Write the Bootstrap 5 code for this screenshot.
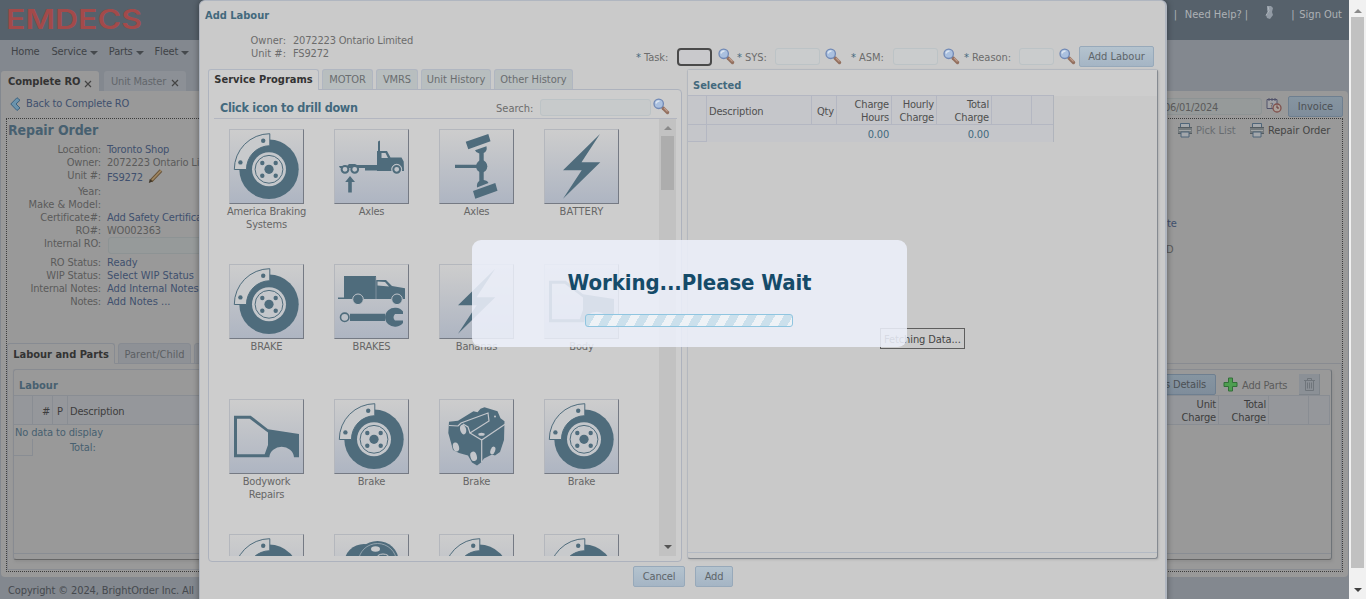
<!DOCTYPE html>
<html lang="en">
<head>
<meta charset="utf-8">
<title>EMDECS - Complete RO</title>
<link href="https://cdn.jsdelivr.net/npm/bootstrap@5.3.0/dist/css/bootstrap.min.css" rel="stylesheet">
<style>
body{width:1366px;height:599px;overflow:hidden;font:11px/13px "DejaVu Sans Condensed","DejaVu Sans",sans-serif;letter-spacing:-.18px;color:#5b5b5b;background:#83888f;white-space:nowrap}
b,.fw-bold{letter-spacing:-.1px}
.page{width:1349px;height:599px}
.topbar{height:40px;background:#56616b;color:#adb1b5;padding-right:7px}
.menu{height:31px;padding:5px 0 0 11px;color:#3f4347;gap:11px}
.caret{width:0;height:0;border:4px solid transparent;border-top-color:#45494d;border-bottom:0;margin:3px 0 0 3px}
.doctab{height:20px;border-radius:3px 3px 0 0;background:#8c9096;color:#62666b;padding:0 7px}
.doctab.on{background:#999;color:#333;height:21px}
.sheet{height:486px;margin:0 1px;background:#999;border-radius:0 4px 4px 4px;padding:5px}
.blue{color:#40506e}.teal{color:#476070}
.fld{border:1px solid #8d9394;border-radius:3px;height:17px;background:#969a9a}
.xbtn{height:21px;border:1px solid #6e7f90;border-radius:2px;background:linear-gradient(#8695a1,#7f8d9b);color:#4c5054}
.dotbox{height:454px;border:1px dotted #3c3c3c;margin-top:1px}
.info .r{height:13px;display:flex}
.info .k{width:93px;text-align:right;margin-right:6px}
.subtab{height:21px;border:1px solid #878b92;border-radius:3px 3px 0 0;background:#8e9196;padding:4px 0 2px;text-align:center;color:#5c5f63}
.subtab.on{background:#999;border-bottom-color:#999;color:#333}
.subpanel{height:207px;border:1px solid #888b91;margin-top:-1px;padding:5px}
.lab{width:1319px;height:191px;border:1px solid #888b91;border-bottom:1px solid #666;border-right-color:#6e7378;border-radius:3px;box-shadow:1px 2px 2px #8888}
.gh{background:#95979b;border:1px solid #898d93;border-width:1px 0;height:30px;color:#3d3d3d}
.gh>div{border-right:1px solid #898d93;display:flex;align-items:center;padding:2px 2px 0}
.dlg{left:199px;top:0;width:968px;height:604px;background:#cacaca;border:1px solid #b0b6c0;border-right-width:2px;border-radius:6px 6px 0 0;box-shadow:0 0 6px #0006;color:#6c6c6c}
.dlg .teal{color:#43697d}
.din{border:1px solid #bcc3c6;border-radius:3px;height:17px;background:#cacccd}
.din.foc{border:2px solid #4a4a4a;border-radius:4px;height:18px;background:#c9c9cc}
.dbtn{height:21px;border:1px solid #97a9ba;border-radius:2px;background:linear-gradient(#b4c3ce,#a5b5c5);color:#5e6569;text-align:center;line-height:19px}
.dtab{height:20px;border:1px solid #b0b6c1;border-bottom:0;border-radius:3px 3px 0 0;background:#b8bebf;text-align:center;line-height:20px;color:#6a6d6f;letter-spacing:-.1px}
.dtab.on{height:21px;background:#cdcdcd;color:#333;position:relative;letter-spacing:0}
.left{width:474px;height:473px;border:1px solid #adb2bd;border-radius:0 4px 4px 4px;background:#cdcdcd;margin-top:-1px;padding:8px 4px 5px 5px}
.icons{width:445px;height:437px;overflow:hidden;padding:10px 0 0 0}
.cellx{width:105px;height:135px;text-align:center;color:#666}
.tile{width:75px;height:75px;border:1px solid #b4b7bd;border-right-color:#757a84;border-bottom-color:#757a84;background:linear-gradient(#cdcdcd,#aeb5c2);margin:0 15px 1px}
.tile svg{display:block;margin:-1px}
.sb{width:17px;background:#c2c2c2}
.right{width:471px;height:490px;border:1px solid #b4b8bf;border-right-color:#858a91;border-bottom-color:#858a91;border-radius:3px;background:#c9c9c9;box-shadow:1px 1px 2px #9997;margin-left:5px}
.sel{border-top:1px solid #b4b7c2;height:30px;color:#4f4f4f;background:#c5c6ca;border-bottom:1px solid #b4b7c2}
.sel>div{border-right:1px solid #b4b7c2;display:flex;align-items:center;padding:2px 2px 0;line-height:13px}
.wait{left:472px;top:240px;width:435px;height:107px;border-radius:9px;background:rgba(237,240,250,.87);padding-top:29px}
.wait h1{font:bold 22px/28px "DejaVu Sans Condensed","DejaVu Sans",sans-serif;color:#154b69;letter-spacing:-.1px;margin:0 0 17px}
.stripes{width:208px;height:13px;margin-right:1px;border:1px solid #8fc5e0;border-radius:3px;background:repeating-linear-gradient(120deg,#cbe0ec 0 8px,#eef2f6 8px 15.6px)}
.fetch{left:880px;top:328px;width:85px;height:21px;border:1px solid #5e5e5e;background:#cacaca;color:#444;padding:4px 3px;letter-spacing:-.1px}
.vs{width:17px;background:#f1f1f1}
</style>
</head>
<body>
<svg width="0" height="0" class="position-absolute">
<defs>
<symbol id="brake" viewBox="0 0 75 75"><circle cx="40" cy="40.3" r="29.7" fill="#4f6c7c"/><circle cx="40" cy="40.3" r="17" fill="#c4c7cb"/><circle cx="40" cy="40.3" r="13.9" fill="none" stroke="#4f6c7c"/><g fill="#4f6c7c"><circle cx="40" cy="40.3" r="4.6"/><circle cx="33.3" cy="34" r="2.2"/><circle cx="46.7" cy="34" r="2.2"/><circle cx="33.3" cy="46.7" r="2.2"/><circle cx="46.7" cy="46.7" r="2.2"/></g><path d="M5.3 40.5A35.7 35.7 0 0 1 40.8 4.7V16.7A23.5 23.5 0 0 0 17.5 40.5Z" fill="#c8cacc" stroke="#4f6c7c"/><circle cx="34.2" cy="11.7" r="2.2" fill="#4f6c7c"/><circle cx="11.4" cy="33.4" r="2.2" fill="#4f6c7c"/></symbol>
<symbol id="truck" viewBox="0 0 75 75"><g fill="#4f6c7c"><path d="M44 12.5l2-1V22h7l3.5 6.500h11l2.2 4L70 42H43V22h1zM47.500 24v5H54L51.500 24z" fill-rule="evenodd"/><path d="M5 37h8l2-2h6l2 1h20v3H6zM31 38h12v3.500H31zM16 47l5 6h-3.200v10.500h-3.600V53H11.200z"/></g><g fill="#c0c4ca" stroke="#4f6c7c" stroke-width="2"><circle cx="11" cy="40.300" r="3.400"/><circle cx="20.700" cy="40.300" r="3.400"/><circle cx="62.700" cy="40.300" r="5" stroke="#bfc3c9" stroke-width="1"/><circle cx="62.700" cy="40.300" r="3.400"/></g></symbol>
<symbol id="axle" viewBox="0 0 75 75"><g fill="#4f6c7c"><path d="M26.700 12.700L49.300 5l2.200 7.300-22.200 8zM34 62l22.300-8 2.200 7.700-22.200 8zM36 21.300l11.500-4q1 5-2.800 6.700V51q4 .5 4.800 3L38 58.500q-.6-5 2.300-6.500V24.500Q37 24 36 21.300zM16 35.700h24V39H16z"/><ellipse cx="42.700" cy="37.300" rx="5.600" ry="6.200"/></g></symbol>
<symbol id="bolt" viewBox="0 0 75 75"><path d="M56 5L19 41.300h18.700L19 69.700l37.300-36.400H37.500z" fill="#4f6c7c"/></symbol>
<symbol id="van" viewBox="0 0 75 75"><path d="M10 12h32v4h10l6 6 13 2.300V35H4v-1.500h6zM43.500 17.500v4L55 22.500l-4-4.500z" fill="#4f6c7c" fill-rule="evenodd"/><path d="M42 13v22" stroke="#9da9b3" stroke-width=".6"/><g fill="#4f6c7c" stroke="#bfc3c9"><circle cx="24" cy="35.300" r="5.300"/><circle cx="63" cy="35.300" r="5.300"/></g><path d="M16 49.700h35V57H16z" fill="#4f6c7c"/><circle cx="10.700" cy="53.300" r="4.200" fill="#bbc0c7" stroke="#4f6c7c" stroke-width="1.600"/><path d="M69 47.500A10 9.500 0 1 0 69 59v-2.500H61q-3-3.200 0-6.500h8z" fill="#4f6c7c"/></symbol>
<symbol id="body" viewBox="0 0 75 75"><path d="M5 16.700h16.700L39 30.300 70 35v23.300h-5a12.400 11.500 0 0 0-24.700 0H5zM8 19.700v35.600h27.700L39 46V33.500L20.700 19.700z" fill="#4f6c7c" fill-rule="evenodd"/></symbol>
<symbol id="engine" viewBox="0 0 75 75"><path d="M10 22.700l9-1 13-8 2.500-1.500 4 1 3-3.500 4-1.500 13 4 3 7 4 3L65 41l-4 12-5 3.500-3-1-8 4-3 4-4 3-5-3-4-7-9-2.500-6-3L9.300 34z" fill="#4f6c7c"/><g fill="none" stroke="#c3c6cb" stroke-width="1.200"><path d="M10 26.500l9 .5 3-3 27-10 1 8L31 34l11.700 7L66 25.300M42.700 41v22M31 34l-2-6-5-3"/></g><g fill="#c3c6cb"><ellipse cx="24" cy="30.500" rx="3" ry="5" transform="rotate(-15 24 30)"/><ellipse cx="17" cy="48" rx="3" ry="4.600" transform="rotate(-15 17 48)"/><ellipse cx="34.500" cy="57.500" rx="3.200" ry="4.800" transform="rotate(-15 34 57)"/><ellipse cx="54" cy="51.500" rx="2.300" ry="4" transform="rotate(20 54 51)"/><ellipse cx="42.500" cy="35.200" rx="3.200" ry="1.500"/><circle cx="56" cy="17.500" r="1"/></g></symbol>
<symbol id="drum" viewBox="0 0 75 75"><ellipse cx="30" cy="30" rx="20" ry="20" fill="#4f6c7c"/><ellipse cx="43.500" cy="27" rx="21" ry="20" fill="#4f6c7c"/><ellipse cx="43.500" cy="28" rx="19" ry="18.500" fill="none" stroke="#a5b1ba" stroke-width=".8"/><ellipse cx="41.500" cy="15" rx="4.500" ry="2.700" fill="#c8cacc"/><ellipse cx="49" cy="25" rx="7" ry="5" fill="none" stroke="#c8cacc"/></symbol>
<symbol id="mag" viewBox="0 0 17 17"><path d="M10 10l4.500 4.500" stroke="#93705f" stroke-width="3.400" stroke-linecap="round"/><path d="M11 10l3.500 3.500" stroke="#c09c8b" stroke-width="1.200"/><circle cx="5.700" cy="5.800" r="4.700" fill="#aac0df" stroke="#7088b5" stroke-width="1.300"/><path d="M3 5.500Q3.500 3 6.500 3" stroke="#dce5f0" stroke-width="1.400" fill="none"/></symbol>
<symbol id="printer" viewBox="0 0 16 16"><path d="M3.500 1.500h9V6h-9z" fill="#a4a8ac" stroke="#4f6579"/><path d="M1 5h14v7H1z" fill="#747a7d"/><path d="M1 5.500h14M1 11.500h14" stroke="#555d62"/><path d="M2 8.500h12" stroke="#a0a4a5"/><path d="M4 10h8v5H4z" fill="#a3a7ab" stroke="#4f6579"/></symbol>
</defs>
</svg>
<div class="d-flex">
<div class="page d-flex flex-column">
  <header class="topbar d-flex justify-content-between align-items-start">
    <svg width="150" height="40"><text x="6" y="28.500" textLength="136" lengthAdjust="spacingAndGlyphs" font-family="Inter,sans-serif" font-weight="600" font-size="26.500" letter-spacing="0" fill="#a34a4a">EMDECS</text></svg>
    <div class="d-flex" style="padding-top:8px"><span>|</span><span style="margin-left:8px;letter-spacing:0">Need Help? |</span>
      <svg width="14" height="15" viewBox="0 0 14 15" style="margin:-3px 15px 0 14px"><path d="M5 1h4l2 2-1 4 1 3-3 4-3-1-1-3 2-2-1-3z" fill="#929ba5"/><path d="M6 1.500l1 4-3 5" stroke="#b0b7be" fill="none"/></svg>
      <span>|</span><span style="margin-left:5px;letter-spacing:0">Sign Out</span></div>
  </header>
  <nav class="menu d-flex"><span style="margin-right:1px">Home</span><span class="d-flex align-items-center" style="height:13px">Service<i class="caret"></i></span><span class="d-flex align-items-center" style="height:13px">Parts<i class="caret"></i></span><span class="d-flex align-items-center" style="height:13px">Fleet<i class="caret"></i></span></nav>
  <div class="d-flex" style="gap:5px;padding-left:1px;height:20px">
    <div class="doctab on d-flex align-items-center justify-content-between fw-bold" style="width:98px"><span style="letter-spacing:0">Complete RO</span><svg width="8" height="8" style="margin-top:4px"><path d="M1 1l6 6M7 1L1 7" stroke="#444" stroke-width="1.200"/></svg></div>
    <div class="doctab d-flex align-items-center justify-content-between" style="width:82px"><span>Unit Master</span><svg width="8" height="8" style="margin-top:4px"><path d="M1 1l6 6M7 1L1 7" stroke="#444" stroke-width="1.200"/></svg></div>
  </div>
  <main class="sheet">
    <div class="d-flex justify-content-between" style="height:21px">
      <div class="d-flex blue" style="padding-left:4px;gap:5px"><svg width="11" height="14" viewBox="0 0 11 14" style="margin-top:1px"><path d="M7 .7l3 2.500L6 7l4 4-3 2.500L.8 7z" fill="#6b93ad" stroke="#3d627f"/></svg><span style="padding-top:1px;letter-spacing:-.13px">Back to Complete RO</span></div>
      <div class="d-flex"><div class="fld text-end" style="width:110px;margin-top:2px;padding:3px 43px 0 0;line-height:12px;letter-spacing:-.3px">06/01/2024</div>
        <svg width="16" height="16" viewBox="0 0 16 16" style="margin:1px 6px 0 4px"><path d="M1 2.500h10v9H1zM3 1v3M6 1v3M9 1v3" fill="#a1a1a5" stroke="#50526b"/><text x="4" y="10.500" font-size="7" fill="#444">?</text><circle cx="11" cy="11" r="4" fill="#aaa09a" stroke="#80514d" stroke-width="1.300"/><path d="M11 8.500V11h2" stroke="#633" fill="none"/></svg>
        <div class="xbtn text-center" style="width:55px;line-height:19px;letter-spacing:0">Invoice</div></div>
    </div>
    <section class="dotbox">
      <div class="d-flex justify-content-between" style="height:224px;padding:0 10px 0 1px">
        <div class="info">
          <div class="fw-bold teal" style="font-size:14px;line-height:16px;padding-top:3px;height:24px">Repair Order</div>
          <div class="r"><span class="k">Location:</span><span class="blue">Toronto Shop</span></div>
          <div class="r"><span class="k">Owner:</span><span>2072223 Ontario Limited</span></div>
          <div class="r" style="height:16px"><span class="k">Unit #:</span><span class="blue" style="padding-top:2px">FS9272</span><svg width="16" height="16" viewBox="0 0 16 16" style="margin:-1px 0 0 5px"><path d="M3 13L13 2.500" stroke="#675339" stroke-width="3.600"/><path d="M4 12L13 2.500" stroke="#a08660" stroke-width="1.800"/><path d="M.8 15l1-4 2.700 2.500z" fill="#403729"/></svg></div>
          <div class="r"><span class="k">Year:</span></div>
          <div class="r"><span class="k" style="letter-spacing:-.05px">Make &amp; Model:</span></div>
          <div class="r"><span class="k">Certificate#:</span><span class="blue">Add Safety Certificate</span></div>
          <div class="r"><span class="k">RO#:</span><span>WO002363</span></div>
          <div class="r" style="height:19px"><span class="k">Internal RO:</span><span class="fld" style="width:150px;margin-left:1px"></span></div>
          <div class="r"><span class="k">RO Status:</span><span class="blue" style="letter-spacing:0">Ready</span></div>
          <div class="r"><span class="k">WIP Status:</span><span class="blue" style="letter-spacing:0">Select WIP Status</span></div>
          <div class="r"><span class="k">Internal Notes:</span><span class="blue" style="letter-spacing:-.03px">Add Internal Notes</span></div>
          <div class="r"><span class="k">Notes:</span><span class="blue" style="letter-spacing:0">Add Notes ...</span></div>
        </div>
        <div style="width:155px">
          <div class="d-flex" style="padding-top:3px;height:98px"><svg width="16" height="16"><use href="#printer"/></svg><span style="width:56px;padding:2px 0 0 3px;color:#686c70;letter-spacing:-.05px">Pick List</span><svg width="16" height="16"><use href="#printer"/></svg><span style="padding:2px 0 0 3px;color:#454545;letter-spacing:-.05px">Repair Order</span></div>
          <div class="blue" style="margin-left:-10px;height:26px">te</div><div style="margin-left:-11px">D</div>
        </div>
      </div>
      <div class="d-flex" style="gap:3px"><div class="subtab on fw-bold" style="width:108px;position:relative;letter-spacing:0">Labour and Parts</div><div class="subtab" style="width:73px;letter-spacing:0">Parent/Child</div><div class="subtab" style="width:73px"></div></div>
      <div class="subpanel"><div class="lab">
        <div class="d-flex justify-content-between" style="height:25px;padding:4px 11px 0 5px"><b class="teal" style="padding-top:5px;letter-spacing:0">Labour</b>
          <div class="d-flex"><div class="xbtn" style="width:90px;text-align:right;padding-right:9px;line-height:19px">Parts Details</div><svg width="15" height="15" viewBox="0 0 15 15" style="margin:3px 4px 0 7px"><path d="M5.500 1h4v4.500H14v4H9.500V14h-4V9.500H1v-4h4.500z" fill="#4e9e50" stroke="#326f38"/></svg><span style="padding-top:5px;width:57px">Add Parts</span><div style="width:21px;height:21px;background:#8b9096;border-right:1px solid #7e848a;border-bottom:1px solid #7e848a"><svg width="20" height="20" viewBox="0 0 20 20" fill="none" stroke="#6f757b"><path d="M5 6.500h11M8.500 6V4.500h4V6M6.500 7v9.500h8V7M8.500 8.500v6M10.500 8.500v6M12.500 8.500v6"/></svg></div></div></div>
        <div class="gh d-flex" style="width:1316px"><div style="width:19px"></div><div class="justify-content-end" style="width:20px">#</div><div class="justify-content-center" style="width:15px">P</div><div style="width:1050px">Description</div><div class="text-end justify-content-end flex-grow-1">Unit<br>Charge</div><div class="text-end justify-content-end" style="width:50px">Total<br>Charge</div><div style="width:40px"></div><div style="width:21px"></div></div>
        <div class="teal" style="height:14px;padding:1px 0 0 1px;letter-spacing:-.13px">No data to display</div>
        <div class="d-flex" style="height:17px"><div style="width:19px;border:1px solid #898d93;border-width:0 1px 1px 0"></div><div class="teal" style="padding:2px 0 0 37px;letter-spacing:-.1px">Total:</div></div>
        <div style="height:98px;border-bottom:1px solid #898d93"></div>
      </div></div>
    </section>
  </main>
  <footer style="padding:7px 0 0 8px;color:#45494e;letter-spacing:-.12px">Copyright © 2024, BrightOrder Inc. All&nbsp; rights reserved</footer>
</div>
<div class="vs d-flex flex-column align-items-center" style="height:599px;padding:9px 0 7px"><svg width="8" height="4"><path d="M0 4l4-4 4 4z" fill="#8a8a8a"/></svg><div style="width:13px;height:551px;background:#c1c1c1;margin:4px 1px 20px 0"></div><svg width="8" height="4"><path d="M0 0l4 4 4-4z" fill="#404040"/></svg></div>
</div>

<div class="dlg position-absolute" role="dialog">
  <b class="teal d-block" style="padding:8px 0 0 5px;height:33px;letter-spacing:0">Add Labour</b>
  <div class="d-flex" style="height:35px">
    <div class="text-end" style="width:86px;letter-spacing:0">Owner:<br>Unit #:</div><div style="width:345px;padding-left:7px">2072223 Ontario Limited<br>FS9272</div>
    <div class="d-flex" style="padding-top:14px;letter-spacing:-.05px">
      <div style="width:46px;padding:3px 0 0 5px"><span class="teal">*</span> Task:</div><div class="din foc" style="width:35px"></div>
      <svg width="17" height="17" style="margin:0 2px 0 6px"><use href="#mag"/></svg><div style="width:38px;padding-top:3px"><span class="teal">*</span> SYS:</div><div class="din" style="width:45px"></div>
      <svg width="17" height="17" style="margin:0 9px 0 5px"><use href="#mag"/></svg><div style="width:42px;padding-top:3px"><span class="teal">*</span> ASM:</div><div class="din" style="width:45px"></div>
      <svg width="17" height="17" style="margin:0 4px 0 5px"><use href="#mag"/></svg><div style="width:55px;padding-top:3px"><span class="teal">*</span> Reason:</div><div class="din" style="width:35px"></div>
      <svg width="17" height="17" style="margin:0 3px 0 5px"><use href="#mag"/></svg><div class="dbtn" style="width:75px;margin-top:-2px;letter-spacing:0">Add Labour</div>
    </div>
  </div>
  <div class="d-flex" style="padding-left:8px">
    <div>
      <div class="d-flex" style="gap:3px;height:21px"><div class="dtab on fw-bold" style="width:111px">Service Programs</div><div class="dtab" style="width:51px">MOTOR</div><div class="dtab" style="width:42px">VMRS</div><div class="dtab" style="width:70px;letter-spacing:0">Unit History</div><div class="dtab" style="width:79px;letter-spacing:0">Other History</div></div>
      <div class="left">
        <div class="d-flex" style="height:21px;border-bottom:1px solid #b3b6c0;padding-left:6px"><b class="teal" style="font-size:12.500px;line-height:19px;width:276px;letter-spacing:-.28px">Click icon to drill down</b><span style="width:44px;padding-top:4px;letter-spacing:0">Search:</span><div class="din" style="width:111px;margin-top:1px;background:#c7cacb"></div><svg width="17" height="17" style="margin-left:2px"><use href="#mag"/></svg></div>
        <div class="d-flex">
          <div class="icons d-flex flex-wrap align-content-start">
            <div class="cellx"><div class="tile"><svg width="75" height="75"><use href="#brake"/></svg></div>America Braking<br>Systems</div>
            <div class="cellx"><div class="tile"><svg width="75" height="75"><use href="#truck"/></svg></div>Axles</div>
            <div class="cellx"><div class="tile"><svg width="75" height="75"><use href="#axle"/></svg></div>Axles</div>
            <div class="cellx"><div class="tile"><svg width="75" height="75"><use href="#bolt"/></svg></div><span style="letter-spacing:.1px">BATTERY</span></div>
            <div class="cellx"><div class="tile"><svg width="75" height="75"><use href="#brake"/></svg></div>BRAKE</div>
            <div class="cellx"><div class="tile"><svg width="75" height="75"><use href="#van"/></svg></div>BRAKES</div>
            <div class="cellx"><div class="tile"><svg width="75" height="75"><use href="#bolt"/></svg></div>Bananas</div>
            <div class="cellx"><div class="tile"><svg width="75" height="75"><use href="#body"/></svg></div>Body</div>
            <div class="cellx"><div class="tile"><svg width="75" height="75"><use href="#body"/></svg></div>Bodywork<br>Repairs</div>
            <div class="cellx"><div class="tile"><svg width="75" height="75"><use href="#brake"/></svg></div>Brake</div>
            <div class="cellx"><div class="tile"><svg width="75" height="75"><use href="#engine"/></svg></div>Brake</div>
            <div class="cellx"><div class="tile"><svg width="75" height="75"><use href="#brake"/></svg></div>Brake</div>
            <div class="cellx"><div class="tile"><svg width="75" height="75"><use href="#brake"/></svg></div></div>
            <div class="cellx"><div class="tile"><svg width="75" height="75"><use href="#drum"/></svg></div></div>
            <div class="cellx"><div class="tile"><svg width="75" height="75"><use href="#brake"/></svg></div></div>
            <div class="cellx"><div class="tile"><svg width="75" height="75"><use href="#brake"/></svg></div></div>
          </div>
          <div class="sb d-flex flex-column align-items-center" style="padding-top:7px"><svg width="8" height="4"><path d="M0 4l4-4 4 4z" fill="#8a8a8a"/></svg><div style="width:13px;height:54px;background:#adadad;margin:6px 0 355px"></div><svg width="8" height="4"><path d="M0 0l4 4 4-4z" fill="#555"/></svg></div>
        </div>
      </div>
    </div>
    <div class="right">
      <div style="height:26px;background:#cdcdcd;padding:9px 0 0 5px"><b class="teal" style="letter-spacing:0">Selected</b></div>
      <div style="width:366px;border-right:1px solid #b0b4bc">
        <div class="sel d-flex" style="margin-top:-1px"><div style="width:19px"></div><div style="width:105px;padding-top:3px">Description</div><div class="justify-content-end" style="width:25px;padding-top:3px">Qty</div><div class="text-end justify-content-end" style="width:55px">Charge<br>Hours</div><div class="text-end justify-content-end" style="width:45px">Hourly<br>Charge</div><div class="text-end justify-content-end" style="width:55px">Total<br>Charge</div><div style="width:40px"></div></div>
        <div class="d-flex teal" style="height:17px;background:#c5c6ca"><div style="width:19px;border:1px solid #b4b7c2;border-width:0 1px 1px 0"></div><div class="text-end" style="width:182px;padding-top:3px">0.00</div><div class="text-end" style="width:100px;padding-top:3px">0.00</div></div>
      </div>
      <div style="height:411px;border-bottom:1px solid #b3b9c3"></div>
    </div>
  </div>
  <div class="d-flex justify-content-center" style="gap:10px;margin-top:4px"><div class="dbtn" style="width:52px;margin-left:1px">Cancel</div><div class="dbtn" style="width:38px">Add</div></div>
</div>
<div class="fetch position-absolute">Fetching Data...</div>
<div class="wait position-absolute d-flex flex-column align-items-center"><h1>Working...Please Wait</h1><div class="stripes"></div></div>
<script src="https://cdn.jsdelivr.net/npm/bootstrap@5.3.0/dist/js/bootstrap.bundle.min.js"></script>
</body>
</html>
